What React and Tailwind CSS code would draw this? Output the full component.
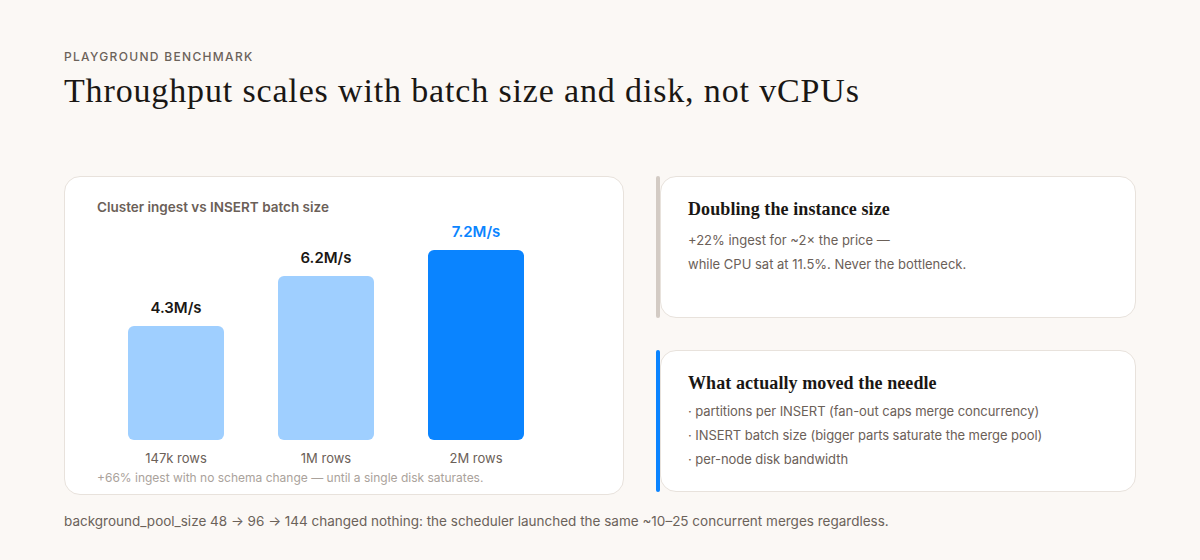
export default function App() {
  const bars = [
    { label: "4.3M/s", rows: "147k rows", h: 114, hi: false },
    { label: "6.2M/s", rows: "1M rows", h: 164, hi: false },
    { label: "7.2M/s", rows: "2M rows", h: 190, hi: true },
  ];
  const serif = { fontFamily: '"Liberation Serif", serif' };
  return (
    <div className="min-h-[560px] w-[1200px] bg-[#fbf8f5] px-16 pt-[49px]" style={{ fontFamily: 'Inter, "Noto Sans", sans-serif' }}>
      <div className="text-[12px] leading-4 font-medium tracking-[0.11em] text-[#6b625a]">PLAYGROUND BENCHMARK</div>
      <h1 className="mt-[6px] text-[34px] leading-10 tracking-[0.025em] text-[#1a1714]" style={serif}>
        Throughput scales with batch size and disk, not vCPUs
      </h1>
      <div className="mt-[65px] grid grid-cols-[560px_480px] items-start gap-8">
        <div className="h-[319px] rounded-2xl border border-[#e8e2dc] bg-white pt-5 px-8">
          <div className="text-[13.5px] leading-5 font-semibold text-[#6b6058]">Cluster ingest vs INSERT batch size</div>
          <div className="flex h-[223px] items-end gap-[54px] pl-[31px]">
            {bars.map((b) => (
              <div key={b.rows} className="flex w-24 flex-col items-center">
                <div className={`mb-[6px] text-[15px] leading-6 font-semibold ${b.hi ? "text-[#0a84ff]" : "text-[#1a1714]"}`}>{b.label}</div>
                <div className={`w-24 rounded-md ${b.hi ? "bg-[#0a84ff]" : "bg-[#9fcfff]"}`} style={{ height: b.h }} />
              </div>
            ))}
          </div>
          <div className="mt-2 flex gap-[54px] pl-[31px]">
            {bars.map((b) => (
              <div key={b.rows} className="w-24 text-center text-[13px] leading-5 text-[#6b6058]">{b.rows}</div>
            ))}
          </div>
          <div className="text-[12px] leading-5 text-[#aaa29b]">+66% ingest with no schema change — until a single disk saturates.</div>
        </div>
        <div className="flex flex-col gap-8">
          <div className="flex h-[142px]">
            <div className="w-1 rounded-full bg-[#d3cbc4]" />
            <div className="flex-1 rounded-2xl border border-[#e8e2dc] bg-white pl-[27px] pt-5">
              <div className="text-[18px] leading-6 font-bold tracking-[0.005em] text-[#1a1714]" style={serif}>Doubling the instance size</div>
              <div className="mt-[7px] text-[13px] leading-6 text-[#6b6058]">
                <div>+22% ingest for ~2× the price —</div>
                <div>while CPU sat at 11.5%. Never the bottleneck.</div>
              </div>
            </div>
          </div>
          <div className="flex h-[142px]">
            <div className="w-1 rounded-full bg-[#0a84ff]" />
            <div className="flex-1 rounded-2xl border border-[#e8e2dc] bg-white pl-[27px] pt-5">
              <div className="text-[18px] leading-6 font-bold tracking-[0.005em] text-[#1a1714]" style={serif}>What actually moved the needle</div>
              <ul className="mt-1 text-[13px] leading-6 tracking-[-0.005em] text-[#6b6058]">
                <li>· partitions per INSERT (fan-out caps merge concurrency)</li>
                <li>· INSERT batch size (bigger parts saturate the merge pool)</li>
                <li>· per-node disk bandwidth</li>
              </ul>
            </div>
          </div>
        </div>
      </div>
      <div className="mt-4 text-[13.5px] leading-5 text-[#6b625a]">
        background_pool_size 48 → 96 → 144 changed nothing: the scheduler launched the same ~10–25 concurrent merges regardless.
      </div>
    </div>
  );
}
